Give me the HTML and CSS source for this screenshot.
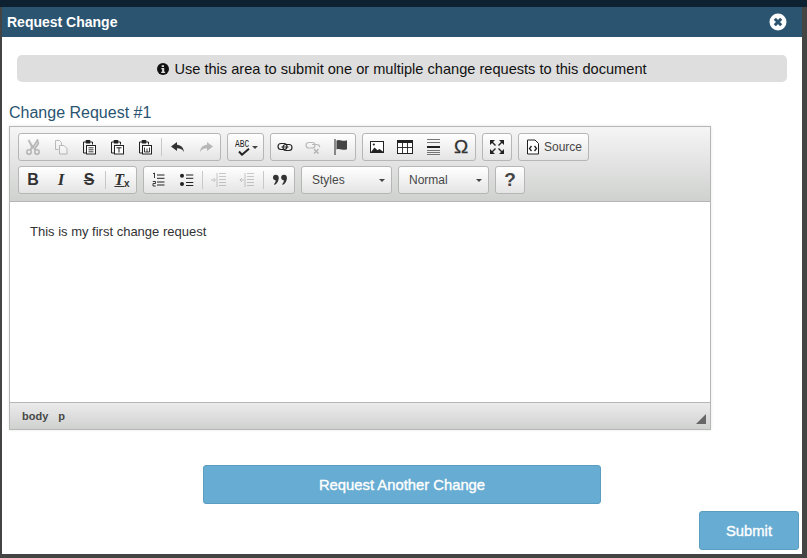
FILE: index.html
```html
<!DOCTYPE html>
<html lang="en">
<head>
<meta charset="utf-8">
<title>Request Change</title>
<link rel="stylesheet" href="styles.css">
</head>
<body>
<svg class="defs" aria-hidden="true">
  <symbol id="cut" viewBox="0 0 16 16"><path d="M3.500 1 8 8.500l4.500-7.500 .8 3.500L9.600 10l1 1.600M12.500 1 8 8.500M3.500 1 7.100 8l-1.700 3" fill="none" stroke="#333" stroke-width="1.800"/><circle cx="4" cy="13" r="2.200" fill="none" stroke="#333" stroke-width="1.500"/><circle cx="12" cy="13" r="2.200" fill="none" stroke="#333" stroke-width="1.500"/></symbol>
  <symbol id="copy" viewBox="0 0 16 16"><path d="M2.500 1.500h4l2 2v3M2.500 1.500v9h3" fill="none" stroke="#333"/><path d="M6.500 6.500h4.500l3 3v5.500h-7.500z" fill="#fff" stroke="#333"/></symbol>
  <symbol id="paste" viewBox="0 0 16 16"><path d="M4.500 3H2.500v11h2.500M9.500 3h2v2.500" fill="none" stroke="#222"/><rect x="4.500" y="1" width="5" height="3.500" rx="1" fill="#222"/><rect x="5.500" y="6.500" width="9" height="8.500" fill="#fff" stroke="#222"/><path d="M7.500 8.800h5M7.500 10.800h5M7.500 12.800h5" stroke="#222" stroke-width=".9"/></symbol>
  <symbol id="pastet" viewBox="0 0 16 16"><path d="M4.500 3H2.500v11h2.500M9.500 3h2v2.500" fill="none" stroke="#222"/><rect x="4.500" y="1" width="5" height="3.500" rx="1" fill="#222"/><rect x="5.500" y="6.500" width="9" height="8.500" fill="#fff" stroke="#222"/><path d="M7.500 8.800h5M10 8.800v4.700" stroke="#222"/></symbol>
  <symbol id="pastew" viewBox="0 0 16 16"><path d="M4.500 3H2.500v11h2.500M9.500 3h2v2.500" fill="none" stroke="#222"/><rect x="4.500" y="1" width="5" height="3.500" rx="1" fill="#222"/><rect x="5.500" y="6.500" width="9" height="8.500" fill="#fff" stroke="#222"/><path d="M7.500 8.500v4.500h5V8.500M10 9.500v3.500" fill="none" stroke="#222" stroke-width=".9"/></symbol>
  <symbol id="undo" viewBox="0 0 16 16"><path d="M7 3 1 7.500 7 12V9.300c3 0 5 .7 7 3.700-.5-4.500-3-7-7-7.300z" fill="#333"/></symbol>
  <symbol id="redo" viewBox="0 0 16 16"><path d="M9 3l6 4.500L9 12V9.300c-3 0-5 .7-7 3.700 .5-4.500 3-7 7-7.300z" fill="#333"/></symbol>
  <symbol id="check" viewBox="0 0 12 8"><path d="M1 3.500l3 3.200L11 .8" fill="none" stroke="#222" stroke-width="2"/></symbol>
  <symbol id="link" viewBox="0 0 16 16"><rect x="1" y="4.500" width="9" height="6" rx="3" fill="none" stroke="#222" stroke-width="1.100"/><rect x="6" y="5.500" width="9" height="6" rx="3" fill="none" stroke="#222" stroke-width="1.100"/><path d="M4.500 8h7" stroke="#222"/></symbol>
  <symbol id="unlink" viewBox="0 0 16 16"><rect x="1" y="3.500" width="9" height="5.500" rx="2.700" fill="none" stroke="#333" stroke-width="1.200"/><path d="M7 5.500h5a2.700 2.700 0 0 1 2.700 2.700" fill="none" stroke="#333" stroke-width="1.200"/><path d="M9 10l4.500 4.500M13.500 10 9 14.500" stroke="#333" stroke-width="1.500"/></symbol>
  <symbol id="flag" viewBox="0 0 16 16"><path d="M1.500 0h1v16h-1z" fill="#222"/><path d="M3.500 1.500c2-1 3-.5 5 0s3.500 .3 5.500-.3v9c-2 .8-3.500 .8-5.500 .3s-3-.8-5 0z" fill="#444"/></symbol>
  <symbol id="image" viewBox="0 0 16 16"><rect x="1.500" y="2.500" width="13" height="11" fill="#fff" stroke="#222"/><path d="M2 13l3.500-4.500 3 2.800 2-1.300 4 3z" fill="#222"/><circle cx="4.800" cy="5.500" r="1.100" fill="#222"/></symbol>
  <symbol id="table" viewBox="0 0 16 16"><rect x=".5" y="1.500" width="15" height="13" fill="#fff" stroke="#222"/><path d="M0 1h16v3H0z" fill="#222"/><path d="M0 8.500h16M5.500 4v11M10.500 4v11" stroke="#222" stroke-width=".9"/></symbol>
  <symbol id="hr" viewBox="0 0 16 16"><path d="M2 .5h13M2 3.500h13M2 11.500h13M2 13.500h13M2 15.500h13" stroke="#555" stroke-width=".8"/><path d="M2 7h13v2H2z" fill="#222"/></symbol>
  <symbol id="fit" viewBox="0 0 16 16"><path d="M1 1h5L1 6zM15 1v5l-5-5zM1 15v-5l5 5zM15 15h-5l5-5z" fill="#222"/><path d="M3 3l3.500 3.500M13 3 9.500 6.500M3 13l3.500-3.500M13 13 9.500 9.500" stroke="#222" stroke-width="1.400"/></symbol>
  <symbol id="source" viewBox="0 0 16 16"><path d="M2.500 1h7.500l3.500 3.500V15h-11z" fill="#fff" stroke="#222"/><path d="M6.500 7 4.500 9.500l2 2.500M9.500 7l2 2.500-2 2.500" fill="none" stroke="#222" stroke-width="1.300"/></symbol>
  <symbol id="ol" viewBox="0 0 16 16"><path d="M7 3h7.500M7 6.300h7.500M7 10h7.500M7 13h7.500" stroke="#222"/><path d="M3 1.800l1.500-.8v5M2.800 9.500h2.700v2H3V14h2.800" fill="none" stroke="#222" stroke-width=".9"/></symbol>
  <symbol id="ul" viewBox="0 0 16 16"><circle cx="4" cy="3.700" r="2" fill="#222"/><circle cx="4" cy="12" r="2" fill="#222"/><path d="M8 3h7.300M8 6.300h7.300M8 10.500h7.300M8 13.500h7.300" stroke="#222"/></symbol>
  <symbol id="indent" viewBox="0 0 16 16"><path d="M8 1.500h7M8 4.500h7M8 7.500h7M8 10.500h7M8 13.500h7M6 1v14" stroke="#333" stroke-width=".8"/><path d="M0 8h4M2.500 6l2 2-2 2" fill="none" stroke="#333" stroke-width=".8"/></symbol>
  <symbol id="outdent" viewBox="0 0 16 16"><path d="M8 1.500h7M8 4.500h7M8 7.500h7M8 10.500h7M8 13.500h7M6 1v14" stroke="#333" stroke-width=".8"/><path d="M5 8H.8M3 6 1 8l2 2" fill="none" stroke="#333" stroke-width=".8"/></symbol>
  <symbol id="quote" viewBox="0 0 16 16"><circle cx="3.800" cy="5.500" r="2.800" fill="#333"/><path d="M6.600 5.500c.2 3.500-1.300 6-4 7.500l-.6-1c1.500-1.200 1.800-2.800 1.500-4.500z" fill="#333"/><circle cx="12" cy="5.500" r="2.800" fill="#333"/><path d="M14.800 5.500c.2 3.500-1.300 6-4 7.500l-.6-1c1.500-1.200 1.800-2.800 1.500-4.500z" fill="#333"/></symbol>
</svg>

<div class="modal">
  <header class="modal-head">
    <h1 class="modal-title">Request Change</h1>
    <svg class="close" viewBox="0 0 18 18" aria-label="Close"><circle cx="9" cy="9" r="8.500" fill="#fff"/><path d="M5.800 5.800l6.400 6.400M12.200 5.800l-6.400 6.400" stroke="#2a5470" stroke-width="3"/></svg>
  </header>
  <div class="modal-body">
    <div class="notice"><svg class="info" viewBox="0 0 12 12"><circle cx="6" cy="6" r="6" fill="#111"/><path d="M4.700 2.200h2.300v1.800H4.700zM4.300 5h2.900v3.700h.9v1.200H4.200V8.700h.9V6.200h-.8z" fill="#ddd"/></svg> Use this area to submit one or multiple change requests to this document</div>
    <h2 class="cr-title">Change Request #1</h2>
    <div class="editor">
      <div class="toolbar">
        <div class="tb-row">
          <div class="grp">
            <span class="btn off"><svg class="ic"><use href="#cut"/></svg></span>
            <span class="btn off"><svg class="ic"><use href="#copy"/></svg></span>
            <span class="btn"><svg class="ic"><use href="#paste"/></svg></span>
            <span class="btn"><svg class="ic"><use href="#pastet"/></svg></span>
            <span class="btn"><svg class="ic"><use href="#pastew"/></svg></span>
            <i class="sep"></i>
            <span class="btn"><svg class="ic"><use href="#undo"/></svg></span>
            <span class="btn off"><svg class="ic"><use href="#redo"/></svg></span>
          </div>
          <div class="grp">
            <span class="btn spell"><span class="abc">ABC</span><svg class="spell-check"><use href="#check"/></svg><i class="caret"></i></span>
          </div>
          <div class="grp">
            <span class="btn"><svg class="ic"><use href="#link"/></svg></span>
            <span class="btn off"><svg class="ic"><use href="#unlink"/></svg></span>
            <span class="btn"><svg class="ic"><use href="#flag"/></svg></span>
          </div>
          <div class="grp">
            <span class="btn"><svg class="ic"><use href="#image"/></svg></span>
            <span class="btn"><svg class="ic"><use href="#table"/></svg></span>
            <span class="btn"><svg class="ic"><use href="#hr"/></svg></span>
            <span class="btn omega">Ω</span>
          </div>
          <div class="grp">
            <span class="btn"><svg class="ic"><use href="#fit"/></svg></span>
          </div>
          <div class="grp">
            <span class="btn src"><svg class="ic"><use href="#source"/></svg><span>Source</span></span>
          </div>
        </div>
        <div class="tb-row">
          <div class="grp">
            <span class="btn fmt b">B</span>
            <span class="btn fmt it">I</span>
            <span class="btn fmt st">S</span>
            <i class="sep"></i>
            <span class="btn fmt tx"><span class="tx-t">T</span><span class="tx-x">x</span></span>
          </div>
          <div class="grp">
            <span class="btn"><svg class="ic"><use href="#ol"/></svg></span>
            <span class="btn"><svg class="ic"><use href="#ul"/></svg></span>
            <i class="sep"></i>
            <span class="btn off"><svg class="ic"><use href="#indent"/></svg></span>
            <span class="btn off"><svg class="ic"><use href="#outdent"/></svg></span>
            <i class="sep"></i>
            <span class="btn"><svg class="ic"><use href="#quote"/></svg></span>
          </div>
          <div class="grp combo"><span>Styles</span><i class="caret"></i></div>
          <div class="grp combo"><span>Normal</span><i class="caret"></i></div>
          <div class="grp">
            <span class="btn help">?</span>
          </div>
        </div>
      </div>
      <div class="content"><p class="content-p">This is my first change request</p></div>
      <div class="statusbar">
        <span class="crumb">body</span><span class="crumb">p</span>
        <i class="resize"></i>
      </div>
    </div>
    <div class="another-wrap"><button class="action another" type="button">Request Another Change</button></div>
    <div class="submit-wrap"><button class="action submit" type="button">Submit</button></div>
  </div>
</div>
</body>
</html>
```

FILE: styles.css
```css
* { box-sizing: border-box; }
html, body { height: 100%; }
body {
  margin: 0;
  padding: 7px 5px 4px 2px;
  background: linear-gradient(#0e2130 0, #0e2130 7px, #444 7px, #444 100%);
  font-family: "Liberation Sans", Arial, sans-serif;
  color: #222;
  overflow: hidden;
}
.defs { position: absolute; width: 0; height: 0; }
.modal { height: 547px; background: #fff; display: flex; flex-direction: column; }
.modal-head {
  height: 30px;
  flex: none;
  background: #2a5470;
  display: flex;
  align-items: center;
  justify-content: space-between;
  padding: 0 15px 0 5px;
}
.modal-title { margin: 0; font-size: 14px; font-weight: bold; color: #fff; }
.close { width: 18px; height: 18px; display: block; }
.modal-body { flex: 1; display: flex; flex-direction: column; padding: 18px 3px 4px 7px; }
.notice {
  margin: 0 12px 0 8px;
  height: 27px;
  border-radius: 5px;
  background: #dedede;
  display: flex;
  align-items: center;
  justify-content: center;
  gap: 5px;
  font-size: 14.6px;
  color: #111;
}
.info { width: 12px; height: 12px; display: block; }
.cr-title { margin: 22px 0 4px; font-size: 16px; line-height: 18px; font-weight: normal; color: #2a5470; }
.editor {
  width: 702px;
  height: 304px;
  border: 1px solid #b6b6b6;
  display: flex;
  flex-direction: column;
  box-shadow: 0 0 3px rgba(0,0,0,.1);
}
.toolbar {
  height: 75px;
  flex: none;
  padding: 6px 0 0 8px;
  border-bottom: 1px solid #b6b6b6;
  background: linear-gradient(#f5f5f5, #cfd1cf);
}
.tb-row { display: flex; gap: 6px; height: 28px; margin-bottom: 5px; }
.grp {
  display: flex;
  align-items: center;
  height: 28px;
  border: 1px solid #b6b6b6;
  border-radius: 3px;
  background: linear-gradient(#fff, #e4e4e4);
}
.btn { width: 28px; height: 26px; display: flex; align-items: center; justify-content: center; position: relative; flex: none; }
.ic { width: 16px; height: 16px; display: block; }
.off .ic { opacity: .3; }
.sep { width: 1px; height: 18px; background: #c8c8c8; margin: 0 2px; flex: none; }
.spell { width: 35px; }
.abc {
  position: absolute;
  left: 7px;
  top: 5px;
  width: 20px;
  font-family: "Liberation Mono", monospace;
  font-size: 11px;
  line-height: 10px;
  color: #222;
  transform: scaleX(.72);
  transform-origin: left top;
}
.spell-check { position: absolute; left: 10px; top: 14px; width: 12px; height: 8px; }
.caret { width: 0; height: 0; border: 3px solid transparent; border-top-color: #444; border-bottom: 0; display: block; }
.spell .caret { position: absolute; left: 24px; top: 12px; }
.omega { font-family: "Liberation Sans", sans-serif; font-size: 19px; color: #333; -webkit-text-stroke: .3px #333; }
.src { width: 69px; justify-content: flex-start; padding-left: 6px; gap: 3px; font-size: 12px; color: #474747; }
.fmt { font-family: "Liberation Sans", sans-serif; font-size: 16px; color: #333; font-weight: bold; }
.it { font-style: italic; font-family: "Liberation Serif", serif; font-size: 17px; }
.st { text-decoration: line-through; }
.tx-t { font-style: italic; font-family: "Liberation Serif", serif; text-decoration: underline; }
.tx-x { font-size: 10px; align-self: flex-end; margin-bottom: 4px; }
.combo { width: 91px; padding: 0 6px 0 10px; justify-content: space-between; font-size: 12px; color: #474747; }
.help { font-size: 19px; font-weight: bold; color: #444; }
.content { flex: 1; background: #fff; border-bottom: 1px solid #b6b6b6; padding: 21px 20px 0; }
.content-p { margin: 0; font-size: 13px; line-height: 18px; color: #333; }
.statusbar {
  height: 26px;
  flex: none;
  background: linear-gradient(#ebebeb, #cfd1cf);
  display: flex;
  align-items: center;
  gap: 10px;
  padding-left: 12px;
  position: relative;
}
.crumb { font-size: 11px; font-weight: bold; color: #484848; }
.resize {
  position: absolute;
  right: 4px;
  bottom: 5px;
  width: 0;
  height: 0;
  border-style: solid;
  border-width: 0 0 10px 10px;
  border-color: transparent transparent #666 transparent;
}
.action {
  border: 1px solid #5b9dc0;
  border-radius: 3px;
  background: #67acd2;
  color: #fff;
  font-family: "Liberation Sans", sans-serif;
  font-size: 14.8px;
  font-weight: normal;
  -webkit-text-stroke: .35px #fff;
  padding: 0;
  display: block;
}
.another-wrap { display: flex; margin-top: 35px; padding-left: 194px; }
.another { width: 398px; height: 39px; }
.submit-wrap { display: flex; justify-content: flex-end; margin-top: 7px; }
.submit { width: 100px; height: 39px; }
```
